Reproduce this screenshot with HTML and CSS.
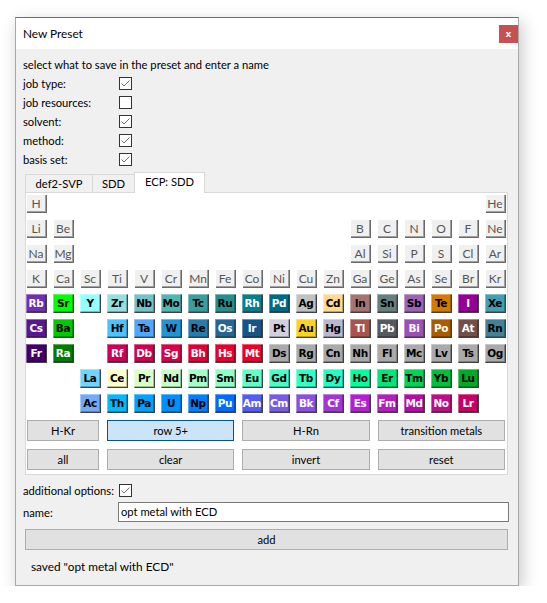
FILE: index.html
```html
<!DOCTYPE html>
<html>
<head>
<meta charset="utf-8">
<link rel="stylesheet" href="styles.css">
</head>
<body>
<div class="window">
  <div class="titlebar">
    <span class="title">New Preset</span>
    <span class="close">x</span>
  </div>
  <div class="content">
    <div class="intro">select what to save in the preset and enter a name</div>
    <div class="opts">
      <span class="lbl">job type:</span><span class="cb"><svg width="13" height="13" viewBox="0 0 13 13"><rect x="0.5" y="0.5" width="12" height="12" fill="#fff" stroke="#333"/><path d="M2.5 6.5 L5 9 L10.5 3.5" fill="none" stroke="#707070"/></svg></span>
      <span class="lbl">job resources:</span><span class="cb"><svg width="13" height="13" viewBox="0 0 13 13"><rect x="0.5" y="0.5" width="12" height="12" fill="#fff" stroke="#333"/></svg></span>
      <span class="lbl">solvent:</span><span class="cb"><svg width="13" height="13" viewBox="0 0 13 13"><rect x="0.5" y="0.5" width="12" height="12" fill="#fff" stroke="#333"/><path d="M2.5 6.5 L5 9 L10.5 3.5" fill="none" stroke="#707070"/></svg></span>
      <span class="lbl">method:</span><span class="cb"><svg width="13" height="13" viewBox="0 0 13 13"><rect x="0.5" y="0.5" width="12" height="12" fill="#fff" stroke="#333"/><path d="M2.5 6.5 L5 9 L10.5 3.5" fill="none" stroke="#707070"/></svg></span>
      <span class="lbl">basis set:</span><span class="cb"><svg width="13" height="13" viewBox="0 0 13 13"><rect x="0.5" y="0.5" width="12" height="12" fill="#fff" stroke="#333"/><path d="M2.5 6.5 L5 9 L10.5 3.5" fill="none" stroke="#707070"/></svg></span>
    </div>
    <div class="tabs">
      <span class="tab t1">def2-SVP</span>
      <span class="tab t2">SDD</span>
      <span class="tab t3 sel">ECP: SDD</span>
    </div>
    <div class="panel">
      <div class="ptable">
        <span class="el">H</span><span></span><span></span><span></span><span></span><span></span><span></span><span></span><span></span><span></span><span></span><span></span><span></span><span></span><span></span><span></span><span></span><span class="el">He</span>
        <span class="el">Li</span><span class="el">Be</span><span></span><span></span><span></span><span></span><span></span><span></span><span></span><span></span><span></span><span></span><span class="el">B</span><span class="el">C</span><span class="el">N</span><span class="el">O</span><span class="el">F</span><span class="el">Ne</span>
        <span class="el">Na</span><span class="el">Mg</span><span></span><span></span><span></span><span></span><span></span><span></span><span></span><span></span><span></span><span></span><span class="el">Al</span><span class="el">Si</span><span class="el">P</span><span class="el">S</span><span class="el">Cl</span><span class="el">Ar</span>
        <span class="el">K</span><span class="el">Ca</span><span class="el">Sc</span><span class="el">Ti</span><span class="el">V</span><span class="el">Cr</span><span class="el">Mn</span><span class="el">Fe</span><span class="el">Co</span><span class="el">Ni</span><span class="el">Cu</span><span class="el">Zn</span><span class="el">Ga</span><span class="el">Ge</span><span class="el">As</span><span class="el">Se</span><span class="el">Br</span><span class="el">Kr</span>
        <span class="el on w" style="--c:#702EB0">Rb</span><span class="el on" style="--c:#00FF00">Sr</span><span class="el on" style="--c:#94FFFF">Y</span><span class="el on" style="--c:#94E0E0">Zr</span><span class="el on" style="--c:#73C2C9">Nb</span><span class="el on" style="--c:#54B5B5">Mo</span><span class="el on" style="--c:#3B9E9E">Tc</span><span class="el on" style="--c:#248F8F">Ru</span><span class="el on w" style="--c:#0A7D8C">Rh</span><span class="el on w" style="--c:#006985">Pd</span><span class="el on" style="--c:#C0C0C0">Ag</span><span class="el on" style="--c:#FFD98F">Cd</span><span class="el on" style="--c:#A67573">In</span><span class="el on" style="--c:#668080">Sn</span><span class="el on" style="--c:#9E63B5">Sb</span><span class="el on" style="--c:#D47A00">Te</span><span class="el on w" style="--c:#940094">I</span><span class="el on" style="--c:#429EB0">Xe</span>
        <span class="el on w" style="--c:#57178F">Cs</span><span class="el on" style="--c:#00C900">Ba</span><span></span><span class="el on" style="--c:#4DC2FF">Hf</span><span class="el on" style="--c:#4DA6FF">Ta</span><span class="el on" style="--c:#2194D6">W</span><span class="el on" style="--c:#267DAB">Re</span><span class="el on w" style="--c:#266696">Os</span><span class="el on w" style="--c:#175487">Ir</span><span class="el on" style="--c:#D0D0E0">Pt</span><span class="el on" style="--c:#FFD123">Au</span><span class="el on" style="--c:#B8B8D0">Hg</span><span class="el on w" style="--c:#A6544D">Tl</span><span class="el on w" style="--c:#575961">Pb</span><span class="el on w" style="--c:#9E4FB5">Bi</span><span class="el on w" style="--c:#AB5C00">Po</span><span class="el on w" style="--c:#754F45">At</span><span class="el on" style="--c:#428296">Rn</span>
        <span class="el on w" style="--c:#420066">Fr</span><span class="el on w" style="--c:#007D00">Ra</span><span></span><span class="el on w" style="--c:#CC0059">Rf</span><span class="el on w" style="--c:#D1004F">Db</span><span class="el on w" style="--c:#D90045">Sg</span><span class="el on w" style="--c:#E00038">Bh</span><span class="el on w" style="--c:#E6002E">Hs</span><span class="el on w" style="--c:#EB0026">Mt</span><span class="el on" style="--c:#AAAAAA">Ds</span><span class="el on" style="--c:#AAAAAA">Rg</span><span class="el on" style="--c:#AAAAAA">Cn</span><span class="el on" style="--c:#AAAAAA">Nh</span><span class="el on" style="--c:#AAAAAA">Fl</span><span class="el on" style="--c:#AAAAAA">Mc</span><span class="el on" style="--c:#AAAAAA">Lv</span><span class="el on" style="--c:#AAAAAA">Ts</span><span class="el on" style="--c:#AAAAAA">Og</span>
        <span></span><span></span><span class="el on" style="--c:#70D4FF">La</span><span class="el on" style="--c:#FFFFC7">Ce</span><span class="el on" style="--c:#D9FFC7">Pr</span><span class="el on" style="--c:#C7FFC7">Nd</span><span class="el on" style="--c:#A3FFC7">Pm</span><span class="el on" style="--c:#8FFFC7">Sm</span><span class="el on" style="--c:#61FFC7">Eu</span><span class="el on" style="--c:#45FFC7">Gd</span><span class="el on" style="--c:#30FFC7">Tb</span><span class="el on" style="--c:#1FFFC7">Dy</span><span class="el on" style="--c:#00FF9C">Ho</span><span class="el on" style="--c:#00E675">Er</span><span class="el on" style="--c:#00D452">Tm</span><span class="el on" style="--c:#00BF38">Yb</span><span class="el on" style="--c:#00AB24">Lu</span><span></span>
        <span></span><span></span><span class="el on" style="--c:#70ABFA">Ac</span><span class="el on" style="--c:#00BAFF">Th</span><span class="el on" style="--c:#00A1FF">Pa</span><span class="el on" style="--c:#008FFF">U</span><span class="el on" style="--c:#0080FF">Np</span><span class="el on w" style="--c:#006BFF">Pu</span><span class="el on w" style="--c:#545CF2">Am</span><span class="el on w" style="--c:#785CE3">Cm</span><span class="el on w" style="--c:#8A4FE3">Bk</span><span class="el on w" style="--c:#A136D4">Cf</span><span class="el on w" style="--c:#B31FD4">Es</span><span class="el on w" style="--c:#B31FBA">Fm</span><span class="el on w" style="--c:#B30DA6">Md</span><span class="el on w" style="--c:#BD0D87">No</span><span class="el on w" style="--c:#C70066">Lr</span><span></span>
      </div>
      <div class="btns">
        <span class="btn">H-Kr</span>
        <span class="btn checked">row 5+</span>
        <span class="btn">H-Rn</span>
        <span class="btn">transition metals</span>
        <span class="btn">all</span>
        <span class="btn">clear</span>
        <span class="btn">invert</span>
        <span class="btn">reset</span>
      </div>
    </div>
    <div class="addl">
      <span class="lbl2">additional options:</span><span class="cb"><svg width="13" height="13" viewBox="0 0 13 13"><rect x="0.5" y="0.5" width="12" height="12" fill="#fff" stroke="#333"/><path d="M2.5 6.5 L5 9 L10.5 3.5" fill="none" stroke="#707070"/></svg></span>
    </div>
    <div class="namerow">
      <span class="lbl">name:</span>
      <span class="input">opt metal with ECD</span>
    </div>
    <div class="btn add">add</div>
    <div class="status">saved "opt metal with ECD"</div>
  </div>
</div>
</body>
</html>
```
FILE: styles.css
```css
html, body {
  margin: 0;
  background: #ffffff;
}
body {
  padding: 17px 0 0 15px;
  font-family: Lato, "Noto Sans", sans-serif;
  font-size: 11.2px;
  color: #000;
}
.window {
  width: 502px;
  height: 567px;
  border: 1px solid #a8a8a8;
  border-top-color: #6e6e6e;
  background: #f0f0f0;
  box-shadow: 3px 5px 16px rgba(0, 0, 0, 0.22);
  display: flex;
  flex-direction: column;
}
.titlebar {
  height: 31px;
  background: #fff;
  display: flex;
  align-items: center;
  justify-content: space-between;
  padding-left: 7px;
}
.title {
  font-size: 11.8px;
}
.close {
  width: 19px;
  height: 18px;
  background: #c75050;
  color: #fff;
  font: bold 9px "DejaVu Sans", sans-serif;
  display: flex;
  align-items: center;
  justify-content: center;
}
.content {
  padding: 7px 10px 0 7px;
  display: flex;
  flex-direction: column;
}
.intro {
  height: 18px;
  line-height: 18px;
}
.opts {
  display: grid;
  grid-template-columns: 96px 13px;
  grid-auto-rows: 19px;
  align-items: center;
}
.cb {
  width: 13px;
  height: 13px;
  display: block;
}
.cb svg {
  display: block;
}
.tabs {
  margin: 3px 0 0 2px;
  height: 20px;
  display: flex;
  align-items: flex-end;
}
.tab {
  box-sizing: border-box;
  height: 18px;
  line-height: 17px;
  text-align: center;
  border: 1px solid #d9d9d9;
  border-bottom: none;
  background: #f0f0f0;
  margin-right: -1px;
}
.t1 { width: 68px; }
.t2 { width: 43px; }
.t3 { width: 71px; }
.tab.sel {
  height: 21px;
  line-height: 18px;
  background: #fff;
  position: relative;
  z-index: 1;
  margin-bottom: -1px;
}
.panel {
  margin-left: 2px;
  width: 481px;
  height: 280px;
  border: 1px solid #d9d9d9;
  background: #fff;
  padding-top: 1px;
  box-sizing: content-box;
}
.ptable {
  display: grid;
  grid-template-columns: repeat(18, 21px);
  grid-auto-rows: 19px;
  column-gap: 6px;
  row-gap: 6px;
}
.el {
  box-sizing: border-box;
  width: 21px;
  height: 19px;
  display: flex;
  align-items: center;
  justify-content: center;
  padding: 0 1px 1px 0;
  background: #f0f0f0;
  color: #555;
  font-size: 12px;
  box-shadow: inset 1px 1px #ffffff, inset -1px -1px #696969, inset -2px -2px #a0a0a0;
}
.el.on {
  background: var(--c);
  color: #000;
  font: bold 10.5px "DejaVu Sans", sans-serif;
  letter-spacing: -0.4px;
  box-shadow: inset 1px 1px rgba(255,255,255,0.35), inset -1px -1px #404040, inset -2px -2px rgba(0,0,0,0.25);
}
.el.on.w {
  color: #fff;
}
.btns {
  margin: 7px 2px 0 1px;
  display: grid;
  grid-template-columns: 72px 1fr 1fr 1fr;
  grid-auto-rows: 21px;
  column-gap: 8px;
  row-gap: 8px;
}
.btn {
  box-sizing: border-box;
  background: #e1e1e1;
  border: 1px solid #adadad;
  display: flex;
  align-items: center;
  justify-content: center;
}
.btn.checked {
  background: #cce4f7;
  border-color: #005499;
}
.addl {
  margin-top: 6px;
  height: 19px;
  display: flex;
  align-items: center;
}
.lbl2 {
  margin-right: 5px;
}
.namerow {
  margin-top: 2px;
  height: 20px;
  display: grid;
  grid-template-columns: 95px 1fr;
  align-items: center;
  margin-right: -1px;
}
.input {
  box-sizing: border-box;
  height: 20px;
  border: 1px solid #7a7a7a;
  background: #fff;
  padding-left: 2px;
  line-height: 18px;
}
.add {
  margin: 7px 0 0 2px;
  height: 21px;
}
.status {
  margin-top: 8px;
  padding-left: 8px;
  line-height: 18px;
  font-size: 11.8px;
}
```
